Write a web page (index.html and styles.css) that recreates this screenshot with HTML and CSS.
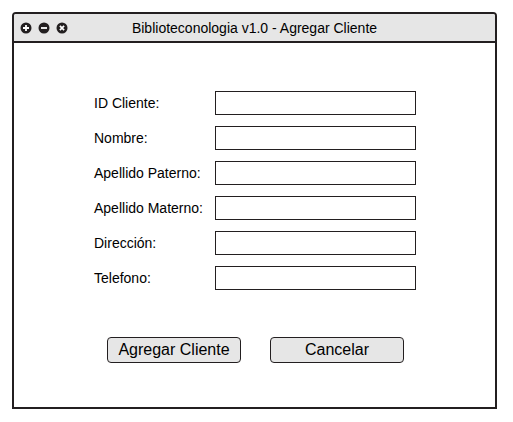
FILE: index.html
```html
<!DOCTYPE html>
<html>
<head>
<meta charset="utf-8">
<link rel="stylesheet" href="styles.css">
</head>
<body>
<div class="window">
  <div class="titlebar">
    <div class="controls">
      <svg class="ctl" viewBox="0 0 12 12" width="12" height="12"><circle cx="6" cy="6" r="5.5" fill="#231f20"/><path d="M6 3v6M3 6h6" stroke="#fff" stroke-width="1.8"/></svg>
      <svg class="ctl" viewBox="0 0 12 12" width="12" height="12"><circle cx="6" cy="6" r="5.5" fill="#231f20"/><path d="M3 6h6" stroke="#fff" stroke-width="1.8"/></svg>
      <svg class="ctl" viewBox="0 0 12 12" width="12" height="12"><circle cx="6" cy="6" r="5.5" fill="#231f20"/><path d="M3.9 3.9l4.2 4.2M8.1 3.9l-4.2 4.2" stroke="#fff" stroke-width="1.7"/></svg>
    </div>
    <div class="title">Biblioteconologia v1.0 - Agregar Cliente</div>
  </div>
  <div class="content">
    <div class="form">
      <div class="row"><span class="label">ID Cliente:</span><span class="input"></span></div>
      <div class="row"><span class="label">Nombre:</span><span class="input"></span></div>
      <div class="row"><span class="label">Apellido Paterno:</span><span class="input"></span></div>
      <div class="row"><span class="label">Apellido Materno:</span><span class="input"></span></div>
      <div class="row"><span class="label">Dirección:</span><span class="input"></span></div>
      <div class="row"><span class="label">Telefono:</span><span class="input"></span></div>
    </div>
    <div class="buttons">
      <button class="btn">Agregar Cliente</button>
      <button class="btn">Cancelar</button>
    </div>
  </div>
</div>
</body>
</html>
```
FILE: styles.css
```css
html, body {
  margin: 0;
  padding: 0;
  background: #ffffff;
}
body {
  padding: 12px 0 0 12px;
  font-family: "Liberation Sans", Arial, sans-serif;
  color: #000;
}
.window {
  box-sizing: border-box;
  width: 485px;
  height: 397px;
  border: 2px solid #231f20;
  border-radius: 4px 4px 0 0;
  display: flex;
  flex-direction: column;
}
.titlebar {
  height: 27px;
  background: #e6e6e6;
  border-bottom: 2px solid #231f20;
  border-radius: 2px 2px 0 0;
  display: flex;
  align-items: center;
  position: relative;
}
.controls {
  display: flex;
  gap: 6px;
  padding-left: 6px;
  padding-top: 1px;
}
.ctl {
  display: block;
}
.title {
  position: absolute;
  left: 0;
  right: 0;
  top: 0;
  bottom: 0;
  display: flex;
  align-items: center;
  justify-content: center;
  font-size: 14px;
}
.content {
  flex: 1;
  display: flex;
  flex-direction: column;
  padding: 48px 0 0 80px;
}
.form {
  display: flex;
  flex-direction: column;
  gap: 11px;
}
.row {
  display: flex;
  align-items: center;
  height: 24px;
}
.label {
  width: 121px;
  font-size: 14px;
}
.input {
  box-sizing: border-box;
  width: 201px;
  height: 24px;
  border: 1px solid #231f20;
  background: #fff;
}
.buttons {
  display: flex;
  gap: 29px;
  padding: 47px 0 0 13px;
}
.btn {
  box-sizing: border-box;
  width: 134px;
  height: 26px;
  background: #e6e6e6;
  border: 1px solid #231f20;
  border-radius: 4px;
  font-family: "Liberation Sans", Arial, sans-serif;
  font-size: 16px;
  color: #000;
  padding: 0;
  margin: 0;
}
```
